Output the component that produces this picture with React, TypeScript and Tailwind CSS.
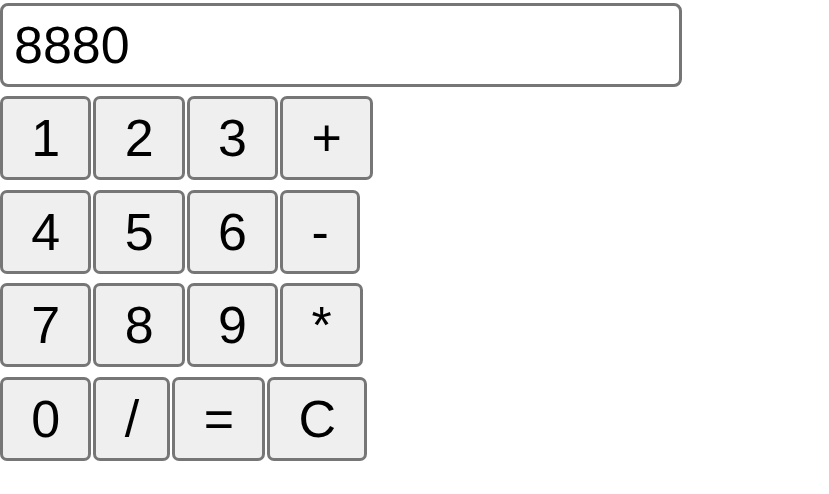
import React from "react";

const rows = [
  ["1", "2", "3", "+"],
  ["4", "5", "6", "-"],
  ["7", "8", "9", "*"],
  ["0", "/", "=", "C"],
];

export default function App() {
  return (
    <div className="bg-white w-[829px] h-[494px] pt-[3px] font-['Liberation_Sans',Arial,sans-serif] text-black">
      <div className="w-[682px] h-[84px] border-[3px] border-[#767676] rounded-[8px] flex items-center pl-[11px] text-[52px] leading-none">
        8880
      </div>
      <div className="flex flex-col gap-[9.67px] mt-[9px]">
        {rows.map((row, i) => (
          <div key={i} className="flex gap-[2px]">
            {row.map((k) => (
              <button
                key={k}
                className="h-[84px] px-[28.25px] border-[3px] border-[#767676] rounded-[7px] bg-[#efefef] text-[52px] leading-none flex items-center justify-center"
              >
                {k}
              </button>
            ))}
          </div>
        ))}
      </div>
    </div>
  );
}
